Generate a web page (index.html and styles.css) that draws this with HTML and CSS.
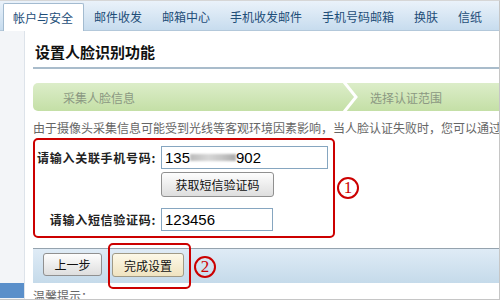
FILE: index.html
```html
<!DOCTYPE html>
<html lang="zh-CN">
<head>
    <meta charset="UTF-8">
    <title>设置人脸识别功能</title>
    <link rel="stylesheet" href="styles.css">
</head>
<body>
    <div class="frame">
        <ul class="tabs">
            <li class="tab active">帐户与安全</li>
            <li class="tab">邮件收发</li>
            <li class="tab">邮箱中心</li>
            <li class="tab">手机收发邮件</li>
            <li class="tab">手机号码邮箱</li>
            <li class="tab">换肤</li>
            <li class="tab">信纸</li>
        </ul>

        <div class="main">
            <div class="sidebar">
                <div class="sidebar-mark"></div>
            </div>

            <div class="content">
                <h2 class="title">设置人脸识别功能</h2>

                <div class="steps">
                    <div class="step done">采集人脸信息</div>
                    <svg class="chevron" width="16" height="28" viewBox="0 0 16 28">
                        <polyline points="1,-1 13,14 1,29" fill="none" stroke="#fff" stroke-width="3"/>
                    </svg>
                    <div class="step">选择认证范围</div>
                </div>

                <p class="desc">由于摄像头采集信息可能受到光线等客观环境因素影响，当人脸认证失败时，您可以通过短信验证码进行验证。</p>

                <div class="verify">
                    <div class="verify-box">
                        <label class="field-label">请输入关联手机号码:</label>
                        <div class="field phone">135<span class="masked"></span>902</div>

                        <span></span>
                        <button class="btn sms-btn" type="button">获取短信验证码</button>

                        <label class="field-label code-label">请输入短信验证码:</label>
                        <div class="field code">123456</div>
                    </div>
                    <span class="mark-num">1</span>
                </div>

                <div class="actions">
                    <button class="btn" type="button">上一步</button>
                    <span class="highlight">
                        <button class="btn btn-primary" type="button">完成设置</button>
                    </span>
                    <span class="mark-num">2</span>
                </div>

                <p class="tip">温馨提示：</p>
            </div>
        </div>
    </div>
</body>
</html>
```

FILE: styles.css
```css
body {
    margin: 0;
    font-family: "Noto Sans CJK SC", "Liberation Sans", sans-serif;
    font-size: 12px;
    color: #333;
    background-color: #fff;
}

.frame {
    width: 500px;
    height: 300px;
    box-sizing: border-box;
    border-top: 1px solid #d6d6d6;
    border-right: 1px solid #c6c6c6;
    border-bottom: 1px solid #c6c6c6;
    display: flex;
    flex-direction: column;
    overflow: hidden;
}

/* top tabs */
.tabs {
    list-style: none;
    margin: 0;
    padding: 2px 0 0 3px;
    height: 30px;
    box-sizing: border-box;
    display: flex;
    flex-shrink: 0;
    background: linear-gradient(#eaf2fa, #c7dcee);
    border-bottom: 1px solid #b3c8da;
}

.tab {
    padding: 0 10px;
    line-height: 27px;
    color: #1d4d78;
    white-space: nowrap;
}

.tab.active {
    background-color: #fff;
    border: 1px solid #a3bbd0;
    border-bottom: none;
    border-radius: 2px 2px 0 0;
    margin-bottom: -1px;
    padding: 0 10px 0 9px;
}

.main {
    flex: 1;
    display: flex;
    min-height: 0;
}

.sidebar {
    width: 24px;
    flex-shrink: 0;
    background-color: #f3f5f8;
    border-right: 1px solid #dde3ea;
    display: flex;
    flex-direction: column;
}

.sidebar-mark {
    margin-top: auto;
    margin-bottom: 1px;
    height: 15px;
    background-color: #5a8fca;
}

.content {
    flex: 1;
    min-width: 0;
    padding-left: 8px;
    overflow: hidden;
}

.title {
    margin: 13px 0 0;
    padding: 0 0 7px 2px;
    font-size: 15px;
    line-height: 16px;
    font-weight: bold;
    color: #111;
    border-bottom: 2px solid #a9bccb;
}

/* step bar */
.steps {
    margin-top: 14px;
    height: 28px;
    display: flex;
    align-items: center;
    background: linear-gradient(#dcedc9, #c4dfa6);
    border-radius: 5px 0 0 5px;
}

.step {
    color: #8b9882;
    white-space: nowrap;
}

.step.done {
    width: 280px;
    padding-left: 30px;
}

.chevron {
    display: block;
    flex-shrink: 0;
}

.steps .step:last-child {
    padding-left: 11px;
}

.desc {
    margin: 10px 0 0;
    line-height: 14px;
    color: #666;
    white-space: nowrap;
}

/* phone verification */
.verify {
    margin-top: 3px;
    display: flex;
    align-items: center;
}

.verify-box {
    width: 302px;
    box-sizing: border-box;
    border: 2px solid #cc0000;
    border-radius: 5px;
    padding: 6px 0 5px;
    display: grid;
    grid-template-columns: 121px auto;
    column-gap: 5px;
    justify-items: start;
    align-items: center;
}

.field-label {
    justify-self: end;
    font-weight: bold;
    letter-spacing: 0.7px;
    color: #222;
    white-space: nowrap;
}

.code-label {
    margin-top: 11px;
}

.field {
    height: 23px;
    box-sizing: border-box;
    border: 1px solid #86a6c0;
    padding: 0 3px;
    font-family: "Liberation Sans", sans-serif;
    font-size: 15px;
    line-height: 21px;
    color: #000;
    display: flex;
    align-items: center;
}

.phone {
    width: 167px;
}

.code {
    width: 112px;
    margin-top: 11px;
}

.masked {
    display: inline-block;
    width: 46px;
    height: 7px;
    background: linear-gradient(90deg, #bbb, #d6d6d6 40%, #c4c4c4 70%, #aaa);
    filter: blur(1px);
}

.btn {
    height: 23px;
    padding: 0 12px;
    font-family: "Noto Sans CJK SC", sans-serif;
    font-size: 12px;
    color: #111;
    background: linear-gradient(#fdfdfd, #dedede);
    border: 1px solid #909090;
    border-radius: 3px;
    cursor: pointer;
}

.sms-btn {
    margin-top: 3px;
    height: 25px;
    width: 113px;
    padding: 0;
}

.mark-num {
    width: 22px;
    height: 22px;
    box-sizing: border-box;
    border: 2px solid #cc0000;
    border-radius: 50%;
    margin-left: 2px;
    color: #cc0000;
    font-family: "Liberation Serif", serif;
    font-size: 17px;
    line-height: 18px;
    text-align: center;
}

/* bottom buttons */
.actions {
    margin-top: 10px;
    height: 35px;
    box-sizing: border-box;
    border-top: 1px solid #95a3ae;
    background: linear-gradient(#dfebf6, #c5daea);
    padding: 4px 0 0 10px;
    display: flex;
    align-items: flex-start;
    gap: 10px;
}

.actions .btn {
    width: 59px;
    padding: 0;
}

.actions .btn-primary {
    width: 72px;
    height: 24px;
    background: linear-gradient(#fdf9e8, #efe3c0);
    border-color: #a09a86;
}

.highlight {
    position: relative;
    display: flex;
}

.highlight::before {
    content: "";
    position: absolute;
    top: -10px;
    left: -4px;
    right: -7px;
    bottom: -12px;
    border: 2px solid #cc0000;
    border-radius: 5px;
}

.actions .mark-num {
    margin: 3px 0 0;
}

.tip {
    margin: 6px 0 0;
    line-height: 14px;
    color: #666;
}
```
